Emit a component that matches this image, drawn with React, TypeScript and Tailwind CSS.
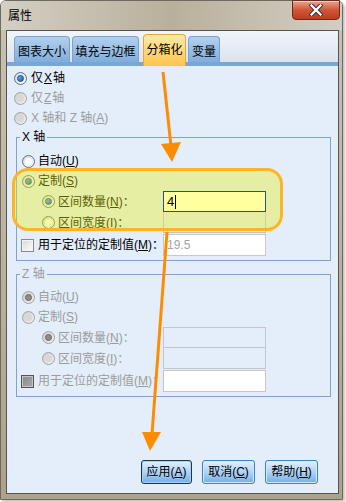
import type { ReactNode } from 'react'
import clsx from 'clsx'

const font = "font-['Liberation_Sans','Noto_Sans_CJK_SC',sans-serif]"

function Radio({ checked = false, disabled = false }: { checked?: boolean; disabled?: boolean }) {
  return (
    <span
      className={clsx(
        'flex h-[13px] w-[13px] shrink-0 items-center justify-center rounded-full border',
        disabled
          ? 'border-[#a2a2a2] bg-gradient-to-br from-[#cdcdcd] to-[#f2f2f2]'
          : 'border-[#5f7086] bg-gradient-to-br from-[#d0d8e3] to-white',
      )}
    >
      {checked ? (
        <span
          className={clsx(
            'h-[7px] w-[7px] rounded-full border',
            disabled ? 'border-[#686868] bg-[#8c8c8c]' : 'border-[#184d8c] bg-gradient-to-br from-[#6cb1f0] to-[#1a5fb0]',
          )}
        />
      ) : (
        <span className={clsx('h-[7px] w-[7px] rounded-full', disabled ? 'bg-[#d8d8d8]' : 'bg-white')} />
      )}
    </span>
  )
}

function Check({ disabled = false }: { disabled?: boolean }) {
  return (
    <span
      className={clsx(
        'h-[13px] w-[13px] shrink-0 border',
        disabled
          ? 'border-[#555555] bg-gradient-to-br from-[#8a8a8a] to-[#a8a8a8] shadow-[inset_0_0_0_1px_#c4c4c4]'
          : 'border-[#8a8a8a] bg-gradient-to-br from-[#d6d6d6] to-white shadow-[inset_0_0_0_1px_#f4f4f4]',
      )}
    />
  )
}

function Tab({ label, active = false, className }: { label: string; active?: boolean; className: string }) {
  return (
    <div
      className={clsx(
        'flex shrink-0 justify-center whitespace-nowrap rounded-t-[4px] border border-b-0',
        active
          ? 'relative z-10 mb-[-4px] h-[32px] items-start border-[#e0a838] bg-gradient-to-b from-[#ffeaa6] to-[#ffc447] pt-[7px]'
          : 'h-[26px] items-end border-[#7aa2cf] bg-gradient-to-b from-[#b3d0ee] to-[#80addb] pb-[2px]',
        className,
      )}
    >
      {label}
    </div>
  )
}

// label + radio on the left, a field starting at x=163
function SubRow({ label, field, checked, disabled }: { label: ReactNode; field: ReactNode; checked?: boolean; disabled?: boolean }) {
  return (
    <div className="flex h-[21px] items-stretch">
      <div className={clsx('flex w-[141px] shrink-0 items-center gap-[3px] whitespace-nowrap pl-[20px]', disabled && 'text-[#9c9c9c]')}>
        <Radio checked={checked} disabled={disabled} />
        <span>{label}</span>
      </div>
      {field}
    </div>
  )
}

function Group({ title, disabled, children }: { title: string; disabled?: boolean; children: ReactNode }) {
  return (
    <fieldset className="ml-[9px] w-[315px] border border-[#7ea4cf] pb-[4px] pl-[5px]">
      <legend className={clsx('ml-[-2px] px-[2px] leading-[16px]', disabled && 'text-[#9c9c9c]')}>{title}</legend>
      {children}
    </fieldset>
  )
}

function Btn({ children, def, className }: { children: ReactNode; def?: boolean; className: string }) {
  return (
    <button
      className={clsx(
        'h-[24px] whitespace-nowrap rounded-[3px] border bg-gradient-to-b from-[#e2f0fd] via-[#b0d3f5] to-[#74aee6] leading-[16px] text-black',
        def ? 'border-[#243244] shadow-[inset_0_0_0_1px_#a6d2fb]' : 'border-[#3a82c8] shadow-[inset_0_0_0_1px_#d4eaff]',
        className,
      )}
    >
      {children}
    </button>
  )
}

export default function App() {
  return (
    <div className={clsx('relative h-[502px] w-[346px] overflow-hidden bg-white text-[12px] leading-[16px] text-black', font)}>
      <div className="flex h-[500px] w-[343px] flex-col rounded-t-[6px] border border-[#6e6a60] shadow-[2px_2px_3px_rgba(0,0,0,0.25)]">
        {/* title bar */}
        <div className="relative flex h-[29px] shrink-0 items-center rounded-t-[5px] bg-gradient-to-r from-[#d4cfc4] via-[#b9b09c] to-[#d3cec3] pl-[7px]">
          <span>属性</span>
          <div className="absolute right-[2px] top-[-1px] flex h-[20px] w-[48px] items-center justify-center rounded-b-[4px] border border-[#6a2b1c] bg-gradient-to-b from-[#e8a48e] via-[#d05536] to-[#bd3c1c] shadow-[inset_0_1px_0_rgba(255,255,255,0.45)]">
            <svg width="14" height="12" viewBox="0 0 14 12">
              <path d="M2.5 1.5 L11.5 10.5 M11.5 1.5 L2.5 10.5" stroke="#3c3c46" strokeWidth="4.4" strokeLinecap="square" />
              <path d="M2.5 1.5 L11.5 10.5 M11.5 1.5 L2.5 10.5" stroke="#ffffff" strokeWidth="2.2" strokeLinecap="square" />
            </svg>
          </div>
        </div>

        <div className="flex min-h-0 flex-1 bg-gradient-to-b from-[#c8c1ae] to-[#aba289] pb-[5px] pl-[5px] pr-[3px]">
          <div className="flex flex-1 flex-col border border-[#545454] bg-[#e3eefa]">
            {/* tabs */}
            <div className="flex h-[31px] shrink-0 items-end bg-gradient-to-b from-[#f1f5fb] to-[#dbe3ee] pl-[7px]">
              <Tab label="图表大小" className="w-[56px]" />
              <Tab label="填充与边框" className="ml-[2px] w-[67px]" />
              <Tab label="分箱化" active className="ml-[4px] w-[43px]" />
              <Tab label="变量" className="ml-[2px] w-[32px]" />
            </div>
            <div className="h-[4px] shrink-0 bg-[#7aa6d3]" />

            <div className="flex flex-1 flex-col pt-[2px]">
              <div className="pl-[7px]">
                <div className="flex h-[20px] items-center gap-[4px]">
                  <Radio checked />
                  <span>
                    仅<u className="mx-[1px]">X</u>轴
                  </span>
                </div>
                <div className="flex h-[20px] items-center gap-[4px] text-[#9c9c9c]">
                  <Radio disabled />
                  <span>
                    仅<u className="mx-[1px]">Z</u>轴
                  </span>
                </div>
                <div className="flex h-[20px] items-center gap-[4px] text-[#9c9c9c]">
                  <Radio disabled />
                  <span>
                    X 轴和 Z 轴(<u>A</u>)
                  </span>
                </div>
              </div>

              <div className="mt-[1px]">
                <Group title="X 轴">
                  <div className="pt-[6px]">
                    <div className="flex h-[20px] items-center gap-[3px]">
                      <Radio />
                      <span>
                        自动(<u>U</u>)
                      </span>
                    </div>
                    <div className="flex h-[20px] items-center gap-[3px]">
                      <Radio checked />
                      <span>
                        定制(<u>S</u>)
                      </span>
                    </div>
                    <SubRow
                      checked
                      label={
                        <>
                          区间数量(<u>N</u>)：
                        </>
                      }
                      field={
                        <div className="relative z-20 flex w-[103px] items-center border border-[#24528e] bg-[#ffffa0] pl-[3px]">
                          <span className="text-[13px]">4</span>
                          <span className="ml-[1px] h-[14px] w-[1px] bg-black" />
                        </div>
                      }
                    />
                    <SubRow
                      label={
                        <>
                          区间宽度(<u>I</u>)：
                        </>
                      }
                      field={<div className="w-[103px] border border-t-0 border-[#c2c2c2]" />}
                    />
                    <div className="mt-[1px] flex h-[22px] items-stretch">
                      <div className="ml-[-1px] flex w-[142px] shrink-0 items-center gap-[4px] whitespace-nowrap">
                        <Check />
                        <span>
                          用于定位的定制值(<u>M</u>)：
                        </span>
                      </div>
                      <div className="flex w-[103px] items-center border border-[#cacaca] bg-white pl-[3px] text-[#a4a4a4]">
                        19.5
                      </div>
                    </div>
                  </div>
                </Group>
              </div>

              <div className="mt-[5px]">
                <Group title="Z 轴" disabled>
                  <div className="pt-[5px] text-[#9c9c9c]">
                    <div className="flex h-[20px] items-center gap-[3px]">
                      <Radio checked disabled />
                      <span>
                        自动(<u>U</u>)
                      </span>
                    </div>
                    <div className="flex h-[20px] items-center gap-[3px]">
                      <Radio disabled />
                      <span>
                        定制(<u>S</u>)
                      </span>
                    </div>
                    <SubRow
                      checked
                      disabled
                      label={
                        <>
                          区间数量(<u>N</u>)：
                        </>
                      }
                      field={<div className="w-[103px] border border-[#c6c6c6]" />}
                    />
                    <SubRow
                      disabled
                      label={
                        <>
                          区间宽度(<u>I</u>)：
                        </>
                      }
                      field={<div className="w-[103px] border border-t-0 border-[#c6c6c6]" />}
                    />
                    <div className="mt-[1px] flex h-[22px] items-stretch">
                      <div className="ml-[-1px] flex w-[142px] shrink-0 items-center gap-[4px] whitespace-nowrap">
                        <Check disabled />
                        <span>
                          用于定位的定制值(<u>M</u>)：
                        </span>
                      </div>
                      <div className="w-[103px] border border-[#c6c6c6] bg-white" />
                    </div>
                  </div>
                </Group>
              </div>

              <div className="mt-auto flex justify-end gap-[10px] pb-[9px] pr-[20px]">
                <Btn def className="w-[51px]">
                  应用(<u>A</u>)
                </Btn>
                <Btn className="w-[53px]">
                  取消(<u>C</u>)
                </Btn>
                <Btn className="w-[53px]">
                  帮助(<u>H</u>)
                </Btn>
              </div>
            </div>
          </div>
        </div>
      </div>

      {/* annotation: highlight box */}
      <div className="pointer-events-none absolute left-[12px] top-[168px] z-10 h-[63px] w-[271px] rounded-[16px] border-[3px] border-[#ffb326] bg-[rgba(235,240,20,0.38)]" />

      {/* annotation: arrows */}
      <svg className="pointer-events-none absolute left-0 top-0 z-30" width="346" height="502" viewBox="0 0 346 502">
        <line x1="163" y1="72" x2="171" y2="146" stroke="#ff8c00" strokeWidth="3" />
        <polygon points="161,144 181,142 172,162" fill="#ff8c00" />
        <line x1="167" y1="232" x2="152" y2="434" stroke="#ff8c00" strokeWidth="3" />
        <polygon points="142,432 161,432 150,451" fill="#ff8c00" />
      </svg>
    </div>
  )
}
